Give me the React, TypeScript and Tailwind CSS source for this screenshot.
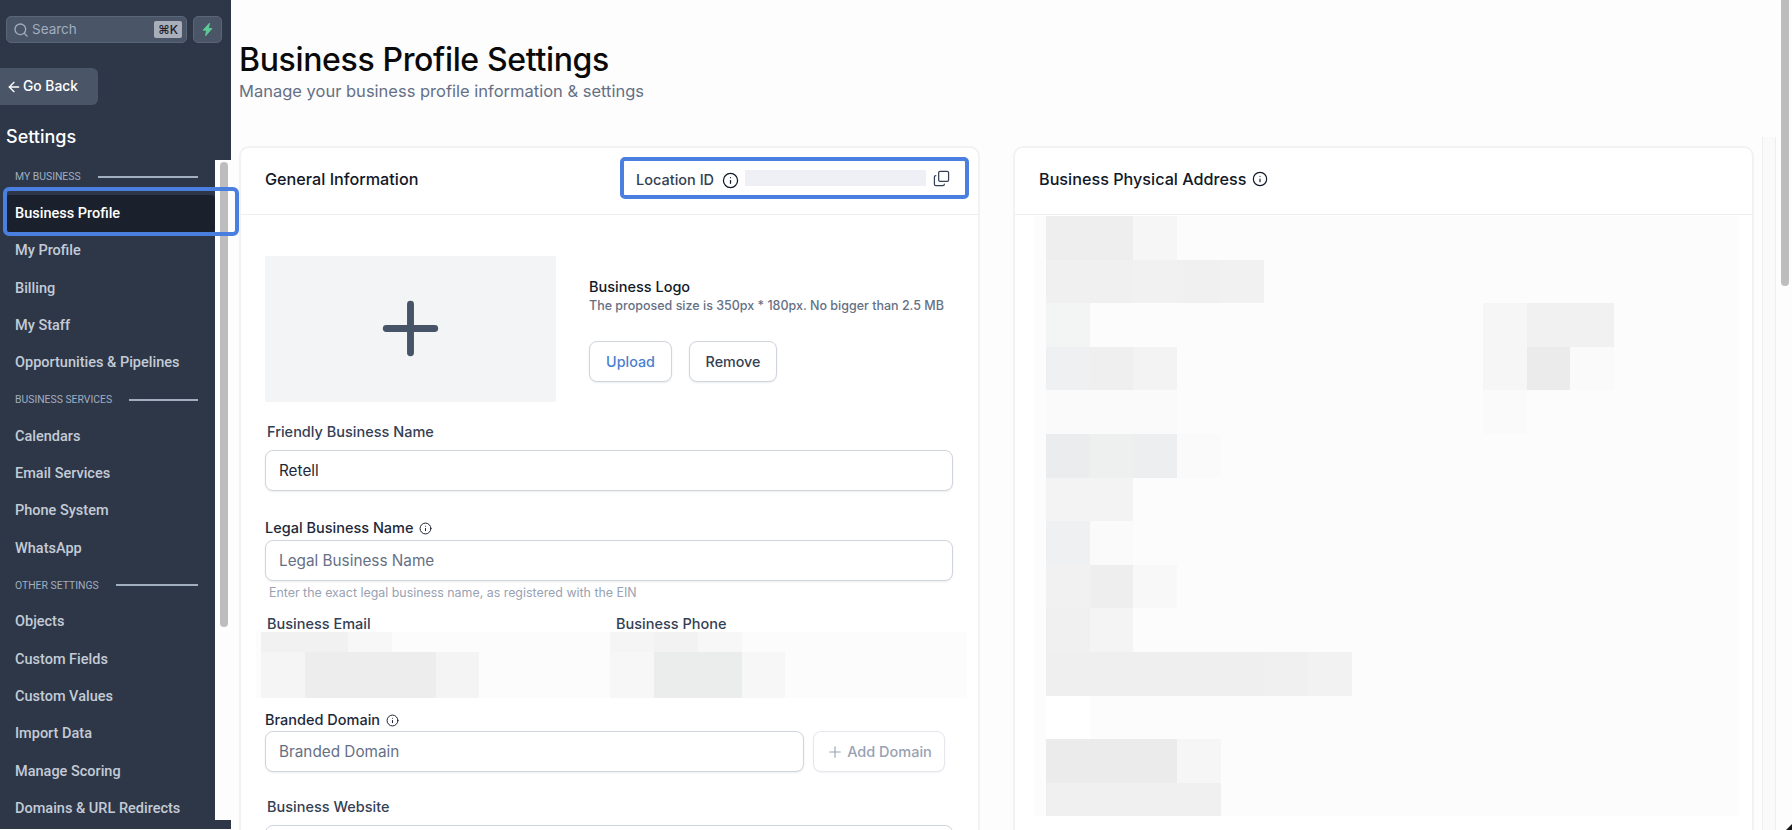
import { ArrowLeft, Copy, Info, Plus, Search } from 'lucide-react'

const navGroups = [
  { title: 'My Business', items: ['Business Profile', 'My Profile', 'Billing', 'My Staff', 'Opportunities & Pipelines'] },
  { title: 'Business Services', items: ['Calendars', 'Email Services', 'Phone System', 'WhatsApp'] },
  { title: 'Other Settings', items: ['Objects', 'Custom Fields', 'Custom Values', 'Import Data', 'Manage Scoring', 'Domains & URL Redirects'] },
]

// redacted areas of the screenshot, one class per mosaic cell
const addressMosaic = [
  ['bg-[#eeeeee]', 'bg-[#eeeeee]', 'bg-[#f6f6f6]'],
  ['bg-[#f0f0f0]', 'bg-[#f0f0f0]', 'bg-[#f0f1f0]', 'bg-[#f0f0f0]', 'bg-[#f0f1f0]'],
  ['bg-[#f3f5f4]', '', '', '', '', '', '', '', '', '', 'bg-[#f6f6f6]', 'bg-[#f0f1f0]', 'bg-[#f1f1f1]'],
  ['bg-[#eef0f1]', 'bg-[#efefef]', 'bg-[#f3f3f3]', '', '', '', '', '', '', '', 'bg-[#f6f6f6]', 'bg-[#ebebeb]', 'bg-[#fafafa]'],
  ['bg-[#fafafa]', 'bg-[#fafafa]', 'bg-[#fafafa]', '', '', '', '', '', '', '', 'bg-[#fafafa]'],
  ['bg-[#ebecee]', 'bg-[#eef0ef]', 'bg-[#edeef0]', 'bg-[#fafafa]'],
  ['bg-[#f3f3f3]', 'bg-[#f3f3f3]'],
  ['bg-[#eff0f2]', 'bg-[#fafafa]'],
  ['bg-[#f1f1f1]', 'bg-[#eeeeee]', 'bg-[#f8f8f8]'],
  ['bg-[#f0f0f0]', 'bg-[#f4f4f4]'],
  ['bg-[#efefef]', 'bg-[#efefef]', 'bg-[#efefef]', 'bg-[#efefef]', 'bg-[#efefef]', 'bg-[#eff0ef]', 'bg-[#f2f2f2]'],
  ['bg-[#ffffff]'],
  ['bg-[#ebebeb]', 'bg-[#ebebeb]', 'bg-[#ebebeb]', 'bg-[#f6f6f6]'],
  ['bg-[#f0f0f0]', 'bg-[#f0f0f0]', 'bg-[#f0f0f0]', 'bg-[#f0f0f0]'],
]
const addressRowHeights = Array.from({ length: 13 }, () => 'h-[43.6px]').concat('h-[33px]')

function Mosaic({ rows, rowClass }: { rows: string[][]; rowClass: string[] }) {
  return (
    <div className="flex flex-col">
      {rows.map((row, i) => (
        <div key={i} className={`flex ${rowClass[i]}`}>
          {row.map((c, j) => (
            <div key={j} className={`w-[43.7px] shrink-0 ${c}`} />
          ))}
        </div>
      ))}
    </div>
  )
}

function Field({ label, dark, info }: { label: string; dark?: boolean; info?: boolean }) {
  return (
    <div className={`flex translate-y-[1px] items-center gap-[6px] h-5 text-[14.5px] font-medium ${dark ? 'text-[#1d2939]' : 'pl-[2px] text-[#344054]'}`}>
      {label}
      {info && <Info className="w-[13px] h-[13px] text-[#111827]" strokeWidth={1.75} />}
    </div>
  )
}

const inputClass = 'block h-[41px] rounded-[8px] border border-[#d0d5dd] bg-white px-[13px] text-[15.3px] text-[#1d2939] placeholder-[#667085] shadow-[0_1px_2px_rgba(16,24,40,0.08)] outline-none'

function Sidebar() {
  return (
    <aside className="relative z-10 flex w-[231px] h-[829px] shrink-0 flex-col bg-[#2d3748] font-['Roboto',sans-serif]">
      <div className="flex gap-[6px] pl-[6px] pt-[16px]">
        <div className="flex h-[27px] w-[181px] items-center rounded-[5px] border border-[#5a6577] bg-[#4a5568] pl-[6px] pr-[4px] font-['Inter',sans-serif]">
          <Search className="w-[16px] h-[16px] text-[#a0aec0]" strokeWidth={2} />
          <span className="-mt-[1px] ml-[3px] flex-1 text-[13.5px] text-[#a0aec0]">Search</span>
          <span className="flex h-[17px] w-[28px] items-center justify-center rounded-[2px] bg-[#a8afba] text-[12px] font-medium text-[#1a202c] font-['Inter','DejaVu_Sans',sans-serif]">⌘K</span>
        </div>
        <div className="flex h-[27px] w-[29px] items-center justify-center rounded-[5px] border border-[#5a6577] bg-[#4a5568]">
          <svg viewBox="0 0 24 24" className="w-[15px] h-[15px]">
            <polygon points="15,2 5,13 10.5,13 9,22 19,10.5 13.5,10.5" fill="#5ccb94" stroke="#5ccb94" strokeWidth="1.5" strokeLinejoin="round" />
          </svg>
        </div>
      </div>

      <button className="mt-[25px] flex h-[37px] w-[98px] items-center gap-[1px] rounded-r-[6px] bg-[#4a5568] pl-[6px] text-[13.8px] font-medium text-white font-['Inter',sans-serif]">
        <ArrowLeft className="w-[16px] h-[16px]" strokeWidth={2} /> Go Back
      </button>
      <h2 className="mt-[20px] h-[24px] pl-[6px] text-[18px] leading-[24px] font-medium text-white font-['Inter',sans-serif]">Settings</h2>

      <div className="mt-[10px] flex h-[661px] items-start">
        <nav className="flex w-[215px] shrink-0 flex-col">
          {navGroups.map(g => (
            <div key={g.title}>
              <div className="flex h-[36.2px] items-center gap-[17px] pl-[15px] pr-[17px] text-[10.4px] uppercase text-[#a0aec0]">
                <span className="whitespace-nowrap">{g.title}</span>
                <span className="h-[2px] flex-1 bg-[#a0aec0]" />
              </div>
              {g.items.map(item => (
                item === 'Business Profile' ? (
                  <div key={item} className="relative ml-[6px] flex h-[37.33px] items-center rounded-[4px] bg-[#1a202c] pl-[9px] text-[14.5px] font-medium text-white">
                    {item}
                    <div className="absolute -left-[3px] -right-[24px] -top-[8px] -bottom-[3px] rounded-[6px] border-[4px] border-[#4a7fe0]" />
                  </div>
                ) : (
                  <div key={item} className="flex h-[37.33px] items-center pl-[15px] text-[14.5px] font-medium whitespace-nowrap text-[#c4cbd6]">{item}</div>
                )
              ))}
            </div>
          ))}
        </nav>
        <div className="mt-[1px] h-[660px] w-[16px] shrink-0 bg-[#fdfdfd] pl-[5px] pt-[2px]">
          <div className="h-[465px] w-[8px] rounded-full bg-[#bdbdbd]" />
        </div>
      </div>
    </aside>
  )
}

function GeneralCard() {
  return (
    <section className="w-[741px] shrink-0 rounded-t-[10px] border-2 border-[#f1f2f4] bg-white">
      <header className="flex h-[67px] items-center justify-between border-b border-[#eceef1] pb-[4px] pl-[24px] pr-[9px]">
        <h3 className="text-[16.2px] font-medium text-[#111827]">General Information</h3>
        <div className="mb-[3px] flex h-[42px] w-[349px] items-center rounded-[5px] border-[4px] border-[#4a7fe0] pl-[12px] pt-[5px] text-[14.5px] font-medium text-[#344054]">
          Location ID
          <Info className="ml-[8px] w-[17px] h-[17px] text-[#111827]" strokeWidth={1.75} />
          <div className="mb-[5px] ml-[6px] h-[16px] w-[181px] bg-[#eef0f6]" />
          <Copy className="mb-[4px] ml-[7px] w-[17px] h-[17px] -scale-y-100 text-[#344054]" strokeWidth={1.75} />
        </div>
      </header>

      <div className="pl-[24px] pr-[24px] pt-[41px]">
        <div className="flex">
          <div className="flex h-[146px] w-[291px] items-center justify-center rounded-[2px] bg-[#f3f4f6]">
            <Plus className="w-[83px] h-[83px] -mt-[2px] text-[#475467]" strokeWidth={2} />
          </div>
          <div className="ml-[33px] pt-[21px]">
            <div className="h-5 text-[14.5px] leading-5 font-medium text-[#111827]">Business Logo</div>
            <p className="mt-[1px] h-4 text-[12.5px] leading-4 font-medium text-[#667085]">The proposed size is 350px * 180px. No bigger than 2.5 MB</p>
            <div className="mt-[27px] flex gap-[17px] text-[14.3px] font-medium">
              <button className="h-[41px] w-[83px] rounded-[8px] border border-[#d0d5dd] bg-white text-[#4a7fd0] shadow-[0_1px_2px_rgba(16,24,40,0.08)]">Upload</button>
              <button className="h-[41px] w-[88px] rounded-[8px] border border-[#d0d5dd] bg-white text-[#344054] shadow-[0_1px_2px_rgba(16,24,40,0.08)]">Remove</button>
            </div>
          </div>
        </div>

        <div className="mt-[19px]"><Field label="Friendly Business Name" /></div>
        <input className={`mt-[9px] w-[688px] ${inputClass}`} defaultValue="Retell" />

        <div className="mt-[26px]"><Field label="Legal Business Name" dark info /></div>
        <input className={`mt-[3px] w-[688px] ${inputClass}`} placeholder="Legal Business Name" />
        <p className="mt-[4px] h-4 pl-[4px] text-[12.4px] leading-4 text-[#98a2b3]">Enter the exact legal business name, as registered with the EIN</p>

        <div className="mt-[12px] grid grid-cols-[349px_1fr]">
          <Field label="Business Email" />
          <Field label="Business Phone" />
        </div>
        <div className="-ml-[9px] -mt-[1px] flex w-[711px] bg-[#fcfcfc]">
          <div className="pl-[5px]">
            <Mosaic rowClass={['h-[20px]', 'h-[46px]']} rows={[
              ['bg-[#f1f1f1]', 'bg-[#f1f1f1]', 'bg-[#f7f7f7]'],
              ['bg-[#f5f5f5]', 'bg-[#ededed]', 'bg-[#ededed]', 'bg-[#ededed]', 'bg-[#f4f4f4]'],
            ]} />
          </div>
          <div className="pl-[131px]">
            <Mosaic rowClass={['h-[20px]', 'h-[46px]']} rows={[
              ['bg-[#f5f5f5]', 'bg-[#f2f2f2]', 'bg-[#f7f7f7]'],
              ['bg-[#f7f7f7]', 'bg-[#ebecec]', 'bg-[#ebecec]', 'bg-[#f7f7f7]'],
            ]} />
          </div>
        </div>

        <div className="mt-[11px]"><Field label="Branded Domain" dark info /></div>
        <div className="mt-[2px] flex gap-[9px]">
          <input className={`w-[539px] ${inputClass}`} placeholder="Branded Domain" />
          <button disabled className="flex h-[41px] w-[132px] items-center justify-center gap-[3px] rounded-[8px] border border-[#e4e7ec] bg-white text-[14.5px] font-medium text-[#98a2b3] shadow-[0_1px_2px_rgba(16,24,40,0.05)]">
            <Plus className="w-[18px] h-[18px]" strokeWidth={1.5} /> Add Domain
          </button>
        </div>

        <div className="mt-[24px]"><Field label="Business Website" /></div>
        <input className={`mt-[9px] w-[688px] ${inputClass}`} />
      </div>
    </section>
  )
}

function AddressCard() {
  return (
    <section className="w-[741px] shrink-0 rounded-t-[10px] border-2 border-[#f1f2f4] bg-white">
      <header className="flex h-[67px] items-center gap-[5px] border-b border-[#eceef1] pb-[4px] pl-[24px]">
        <h3 className="text-[16.2px] font-medium text-[#111827]">Business Physical Address</h3>
        <Info className="w-[16px] h-[16px] text-[#111827]" strokeWidth={1.75} />
      </header>
      <div className="ml-[19px] mt-[1px] w-[704px] bg-[#fcfcfc] pl-[12px]">
        <Mosaic rows={addressMosaic} rowClass={addressRowHeights} />
      </div>
    </section>
  )
}

export default function App() {
  return (
    <div className="relative flex h-[830px] w-[1792px] overflow-hidden bg-[#fdfdfd] font-['Inter',sans-serif]">
      <Sidebar />
      <main className="w-[1531px] shrink-0 pl-[8px] pt-[39px]">
        <h1 className="h-[40px] translate-y-[1px] text-[32px] leading-[40px] font-medium tracking-[-0.35px] text-[#0a0a0a]">Business Profile Settings</h1>
        <p className="h-[24px] text-[16.5px] leading-[24px] text-[#667085]">Manage your business profile information &amp; settings</p>
        <div className="mt-[43px] flex gap-[33px]">
          <GeneralCard />
          <AddressCard />
        </div>
      </main>
      <div className="mt-[137px] w-[14px] shrink-0 border-x border-[#eeeeee] bg-[#fafafa]" />
      <div className="w-[16px] shrink-0 pl-[5px]">
        <div className="h-[286px] w-[8px] rounded-b-full bg-[#bdbdbd]" />
      </div>
      <div className="absolute bottom-0 right-0 h-[6px] w-[6px] bg-[#1a1a1a] [clip-path:polygon(100%_0,100%_100%,0_100%)]" />
    </div>
  )
}
